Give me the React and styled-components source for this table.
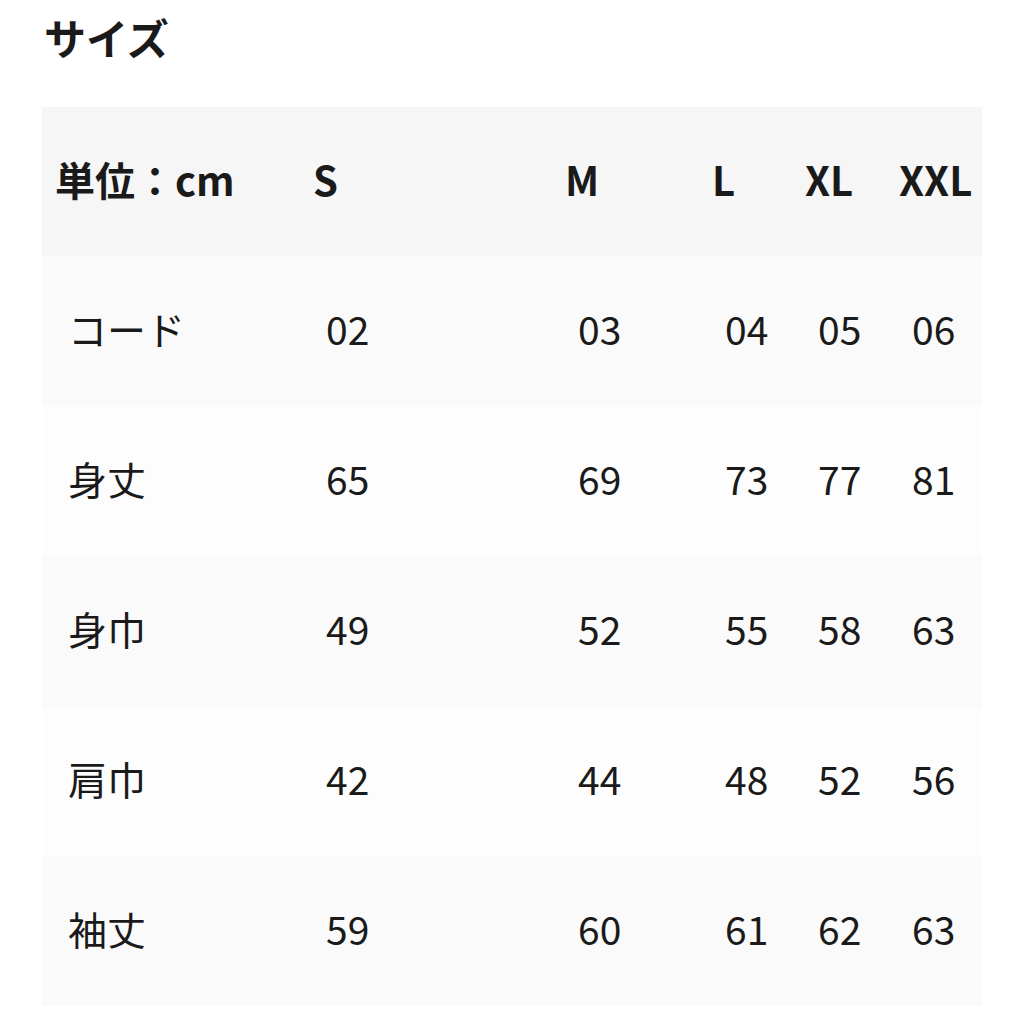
import React from "react";
import styled, { createGlobalStyle } from "styled-components";

const Global = createGlobalStyle`
  html, body { margin: 0; padding: 0; background: #ffffff; }
  body { font-family: "Noto Sans CJK JP", "Noto Sans", sans-serif; color: #1a1a1a; }
`;

const Page = styled.div`
  padding: 0 42px;
  width: 940px;
`;

const Title = styled.h2`
  margin: 0;
  padding: 8px 0 0 2px;
  font-size: 42px;
  line-height: 58px;
  font-weight: 700;
  height: 107px;
  box-sizing: border-box;
`;

const Table = styled.table`
  border-collapse: collapse;
  table-layout: fixed;
  width: 940px;
`;

const HeadRow = styled.tr`
  background: #f6f6f6;
  height: 149px;
`;

const BodyRow = styled.tr`
  background: ${(p) => (p.$odd ? "#fafafa" : "#fdfdfd")};
  height: 150px;
`;

const Th = styled.th`
  padding: 0 0 6px 13px;
  text-align: left;
  font-size: 40px;
  font-weight: 700;
  line-height: 1;
  vertical-align: middle;
  white-space: nowrap;
`;

const Td = styled.td`
  padding: 0 0 6px 26px;
  text-align: left;
  font-size: 39px;
  font-weight: 400;
  line-height: 1;
  vertical-align: middle;
  white-space: nowrap;
`;

const widths = [258, 252, 147, 93, 94, 96];
const sizes = ["S", "M", "L", "XL", "XXL"];
const rows = [
  ["コード", "02", "03", "04", "05", "06"],
  ["身丈", "65", "69", "73", "77", "81"],
  ["身巾", "49", "52", "55", "58", "63"],
  ["肩巾", "42", "44", "48", "52", "56"],
  ["袖丈", "59", "60", "61", "62", "63"],
];

export default function App() {
  return (
    <Page>
      <Global />
      <Title>サイズ</Title>
      <Table>
        <colgroup>
          {widths.map((w, i) => (
            <col key={i} style={{ width: w }} />
          ))}
        </colgroup>
        <thead>
          <HeadRow>
            <Th>単位：cm</Th>
            {sizes.map((s) => (
              <Th key={s}>{s}</Th>
            ))}
          </HeadRow>
        </thead>
        <tbody>
          {rows.map((r, i) => (
            <BodyRow key={r[0]} $odd={i % 2 === 0}>
              {r.map((c, j) => (
                <Td key={j}>{c}</Td>
              ))}
            </BodyRow>
          ))}
        </tbody>
      </Table>
    </Page>
  );
}
